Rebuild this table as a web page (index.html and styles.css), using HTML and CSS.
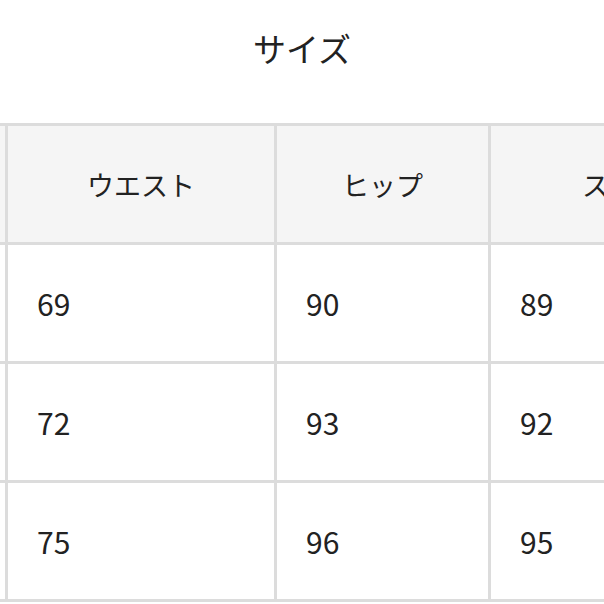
FILE: index.html
```html
<!DOCTYPE html>
<html lang="ja">
<head>
<meta charset="utf-8">
<link rel="stylesheet" href="styles.css">
</head>
<body>
<h1 class="title">サイズ</h1>
<div class="table-wrap">
  <table class="size-table">
    <colgroup>
      <col class="c0"><col class="c1"><col class="c2"><col class="c3">
    </colgroup>
    <thead>
      <tr><th class="edge"></th><th>ウエスト</th><th>ヒップ</th><th>スカート丈</th></tr>
    </thead>
    <tbody>
      <tr><td class="edge"></td><td>69</td><td>90</td><td>89</td></tr>
      <tr><td class="edge"></td><td>72</td><td>93</td><td>92</td></tr>
      <tr><td class="edge"></td><td>75</td><td>96</td><td>95</td></tr>
    </tbody>
  </table>
</div>
</body>
</html>
```
FILE: styles.css
```css
* { box-sizing: border-box; }
html, body {
  margin: 0;
  background: #fff;
  font-family: "Noto Sans CJK JP", "Noto Sans", sans-serif;
  color: #222;
}
.title {
  margin: 24px 0 0;
  font-size: 33px;
  line-height: 48px;
  font-weight: 400;
  text-align: center;
  color: #222;
}
.table-wrap {
  margin-top: 51px;
  width: 604px;
  overflow: hidden;
}
.size-table {
  table-layout: fixed;
  border-collapse: separate;
  border-spacing: 0;
  width: 808px;
  border-top: 3px solid #dcdcdc;
}
.c0 { width: 5px; }
.c1 { width: 269px; }
.c2 { width: 214px; }
.c3 { width: 320px; }
.size-table th,
.size-table td {
  border-left: 3px solid #dcdcdc;
  border-bottom: 3px solid #dcdcdc;
  height: 119px;
  padding: 0 0 0 29px;
  vertical-align: middle;
}
.size-table .edge {
  border-left: none;
  padding: 0;
}
.size-table th {
  background: #f5f5f5;
  font-size: 27px;
  font-weight: 400;
  text-align: center;
  padding: 0;
  white-space: nowrap;
}
.size-table td {
  font-size: 30px;
  font-weight: 400;
  text-align: left;
}
```
